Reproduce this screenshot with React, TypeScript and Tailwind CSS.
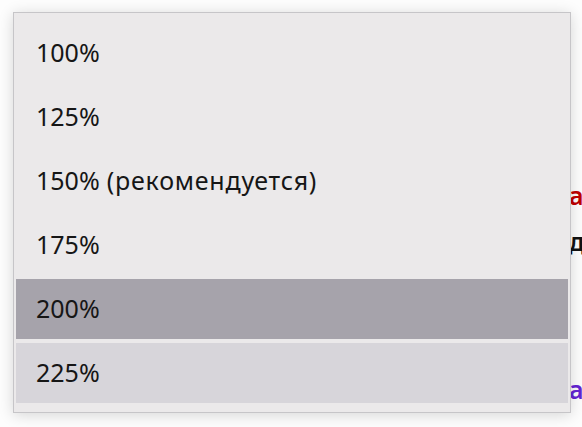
const options = [
  { value: '100%' },
  { value: '125%' },
  { value: '150%', note: '(рекомендуется)' },
  { value: '175%' },
  { value: '200%' },
  { value: '225%' },
];

const selected = '200%';
const hovered = '225%';

export default function App() {
  return (
    <div
      className="relative h-[427px] w-[582px] overflow-hidden bg-[#fdfdfd] text-[25px]"
      style={{ fontFamily: '"Noto Sans", "Open Sans", sans-serif' }}
    >
      {/* page content behind the menu */}
      <div className="flex flex-col pl-[569px] pt-[180px] leading-[30px]">
        <span className="font-semibold text-[#c00000]">а</span>
        <span className="mt-[16px] font-semibold text-[#111]">д</span>
        <span className="mt-[118px] font-semibold text-[#6424d4]">а</span>
      </div>

      <div className="absolute left-[13px] top-[12px] flex w-[558px] flex-col gap-[4px] border border-[#c6c5c8] bg-[#ebe9ea] px-[2px] pb-[9px] pt-[10px] shadow-[0_2px_14px_rgba(0,0,0,0.16)]">
        {options.map((o) => (
          <div
            key={o.value}
            className={
              'flex h-[60px] items-center gap-[7px] pl-[20px] text-[#161616] ' +
              (o.value === selected ? 'bg-[#a6a3ab]' : o.value === hovered ? 'bg-[#d7d5da]' : '')
            }
          >
            <span>{o.value}</span>
            {o.note && <span className="tracking-[0.8px]">{o.note}</span>}
          </div>
        ))}
      </div>
    </div>
  );
}
